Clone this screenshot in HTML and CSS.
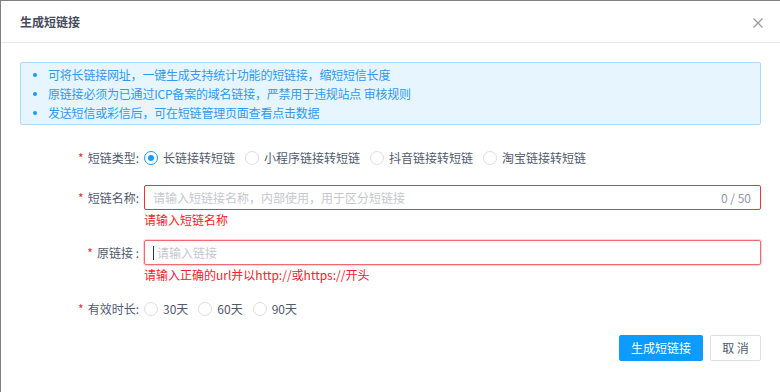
FILE: index.html
```html
<!DOCTYPE html>
<html lang="zh-CN">
<head>
<meta charset="utf-8">
<title>生成短链接</title>
<link rel="stylesheet" href="styles.css">
</head>
<body>
<div class="dialog">
  <div class="dialog-header">
    <span class="dialog-title">生成短链接</span>
    <span class="dialog-close">
      <svg width="10" height="10" viewBox="0 0 10 10"><path d="M0.5 0.5 L9.5 9.5 M9.5 0.5 L0.5 9.5" stroke="#999" stroke-width="1.2" fill="none"/></svg>
    </span>
  </div>
  <div class="dialog-body">
    <ul class="alert">
      <li>可将长链接网址，一键生成支持统计功能的短链接，缩短短信长度</li>
      <li>原链接必须为已通过ICP备案的域名链接，严禁用于违规站点 审核规则</li>
      <li>发送短信或彩信后，可在短链管理页面查看点击数据</li>
    </ul>

    <div class="form">
      <div class="form-item item-type">
        <label class="form-label"><span class="req">*</span>短链类型:</label>
        <div class="form-content radios">
          <span class="radio checked"><span class="radio-inner"></span>长链接转短链</span>
          <span class="radio"><span class="radio-inner"></span>小程序链接转短链</span>
          <span class="radio"><span class="radio-inner"></span>抖音链接转短链</span>
          <span class="radio"><span class="radio-inner"></span>淘宝链接转短链</span>
        </div>
      </div>

      <div class="form-item item-name">
        <label class="form-label"><span class="req">*</span>短链名称:</label>
        <div class="form-content">
          <div class="input error">
            <span class="placeholder">请输入短链接名称，内部使用，用于区分短链接</span>
            <span class="count">0 / 50</span>
          </div>
          <div class="error-tip">请输入短链名称</div>
        </div>
      </div>

      <div class="form-item item-url">
        <label class="form-label"><span class="req">*</span>原链接 :</label>
        <div class="form-content">
          <div class="input error focus">
            <span class="caret"></span><span class="placeholder">请输入链接</span>
          </div>
          <div class="error-tip">请输入正确的url并以http://或https://开头</div>
        </div>
      </div>

      <div class="form-item item-days">
        <label class="form-label"><span class="req">*</span>有效时长:</label>
        <div class="form-content radios">
          <span class="radio"><span class="radio-inner"></span>30天</span>
          <span class="radio"><span class="radio-inner"></span>60天</span>
          <span class="radio"><span class="radio-inner"></span>90天</span>
        </div>
      </div>
    </div>

    <div class="footer">
      <button class="btn btn-primary">生成短链接</button>
      <button class="btn btn-default">取&nbsp;消</button>
    </div>
  </div>
</div>
</body>
</html>
```

FILE: styles.css
```css
* { box-sizing: border-box; }
html, body { margin: 0; padding: 0; }
body {
  background: #808080;
  font-family: "Noto Sans CJK SC", "Liberation Sans", sans-serif;
  font-size: 12px;
  color: #515a6e;
  width: 780px;
  height: 392px;
  overflow: hidden;
}
.dialog {
  margin: 1px 0 0 1px;
  width: 779px;
  height: 391px;
  background: #fff;
}
.dialog-header {
  height: 42px;
  border-bottom: 1px solid #e8eaec;
  display: flex;
  align-items: center;
  justify-content: space-between;
  padding: 0 17px 0 19px;
}
.dialog-title {
  font-size: 12px;
  font-weight: 700;
  color: #464c5b;
  line-height: 16px;
}
.dialog-close {
  width: 10px;
  height: 10px;
  display: flex;
  margin-top: 2px;
}
.dialog-body {
  padding: 19px 19px 0 19px;
}
.alert {
  margin: 0;
  list-style: none;
  border: 1px solid #abdcff;
  background: #e6f5ff;
  border-radius: 2px;
  padding: 2px 10px 2px 27px;
  color: #2d9bf4;
  line-height: 19px;
  letter-spacing: -0.2px;
}
.alert li { position: relative; }
.alert li::before {
  content: "";
  position: absolute;
  left: -15px;
  top: 8px;
  width: 4px;
  height: 4px;
  border-radius: 50%;
  background: #1a9bfc;
}
.form { padding-top: 20px; }
.form-item {
  display: flex;
  align-items: flex-start;
}
.form-label {
  width: 124px;
  flex: none;
  text-align: right;
  padding-right: 5px;
  line-height: 25px;
  color: #515a6e;
}
.req {
  color: #ed2b2b;
  margin-right: 4px;
}
.form-content { flex: 1; }
.item-type { margin-bottom: 15px; }
.item-name { margin-bottom: 10px; }
.item-url { margin-bottom: 11px; }
.item-days { margin-bottom: 14px; }
.radios {
  display: flex;
  align-items: center;
  height: 25px;
}
.radio {
  display: inline-flex;
  align-items: center;
  margin-right: 10px;
  color: #515a6e;
  line-height: 25px;
}
.radio-inner {
  width: 14px;
  height: 14px;
  border: 1px solid #dcdee2;
  border-radius: 50%;
  margin-right: 5px;
  position: relative;
  background: #fff;
}
.radio.checked .radio-inner { border-color: #1a9bfc; }
.radio.checked .radio-inner::after {
  content: "";
  position: absolute;
  left: 3px;
  top: 3px;
  width: 6px;
  height: 6px;
  border-radius: 50%;
  background: #1a9bfc;
}
.input {
  height: 25px;
  border: 1px solid #e8353f;
  border-radius: 2px;
  display: flex;
  align-items: center;
  padding: 0 9px 0 8px;
  position: relative;
}
.input.focus {
  border-color: #f06a6f;
  box-shadow: 0 0 0 1px rgba(240, 80, 90, 0.25);
}
.placeholder { color: #c5c8ce; flex: 1; }
.count { color: #8f97ab; }
.caret {
  width: 1px;
  height: 14px;
  background: #333;
  margin-right: 3px;
}
.error-tip {
  color: #f5222d;
  line-height: 20px;
  height: 20px;
}
.footer {
  display: flex;
  justify-content: flex-end;
  gap: 7px;
}
.btn {
  height: 26px;
  padding: 0 11px;
  font-family: inherit;
  font-size: 12px;
  border-radius: 2px;
  line-height: 24px;
  white-space: nowrap;
  cursor: pointer;
}
.btn-primary {
  background: #0d9bff;
  border: 1px solid #0d9bff;
  color: #fff;
  min-width: 83px;
}
.btn-default {
  background: #fff;
  border: 1px solid #dcdee2;
  color: #515a6e;
  min-width: 51px;
}
```
